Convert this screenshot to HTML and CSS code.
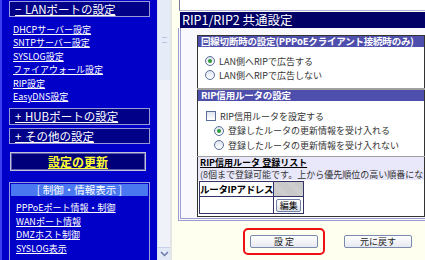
FILE: index.html
```html
<!DOCTYPE html>
<html lang="ja">
<head>
    <meta charset="UTF-8">
    <title>RIP設定</title>
    <link rel="stylesheet" href="styles.css">
</head>
<body>
<div class="frame">
    <nav class="side">
        <div class="group group-top"><a href="#">− LANポートの設定</a></div>
        <ul class="links">
            <li><a href="#">DHCPサーバー設定</a></li>
            <li><a href="#">SNTPサーバー設定</a></li>
            <li><a href="#">SYSLOG設定</a></li>
            <li><a href="#">ファイアウォール設定</a></li>
            <li><a href="#">RIP設定</a></li>
            <li><a href="#">EasyDNS設定</a></li>
        </ul>
        <div class="group group-hub"><a href="#">+ HUBポートの設定</a></div>
        <div class="group"><a href="#">+ その他の設定</a></div>
        <div class="update"><a href="#">設定の更新</a></div>
        <div class="info">
            <div class="info-head">[ 制御・情報表示 ]</div>
            <ul class="links info-links">
                <li><a href="#">PPPoEポート情報・制御</a></li>
                <li><a href="#">WANポート情報</a></li>
                <li><a href="#">DMZホスト制御</a></li>
                <li><a href="#">SYSLOG表示</a></li>
            </ul>
        </div>
    </nav>

    <div class="scrollbar">
        <div class="thumb"><span class="grip"></span></div>
        <div class="arrow">
            <svg width="9" height="6" viewBox="0 0 9 6"><path d="M1 1 L4.5 4.5 L8 1" fill="none" stroke="#6a7aa8" stroke-width="1.5"/></svg>
        </div>
    </div>

    <main class="content">
        <div class="prev"></div>
        <h2 class="title">RIP1/RIP2 共通設定</h2>
        <div class="panel">
            <table class="settings">
                <tr><th class="head">回線切断時の設定(PPPoEクライアント接続時のみ)</th></tr>
                <tr>
                    <td class="opts opts-first">
                        <div class="opt"><span class="radio on"></span>LAN側へRIPで広告する</div>
                        <div class="opt"><span class="radio"></span>LAN側へRIPで広告しない</div>
                    </td>
                </tr>
                <tr><th class="head">RIP信用ルータの設定</th></tr>
                <tr>
                    <td class="opts opts-second">
                        <div class="opt"><span class="check"></span>RIP信用ルータを設定する</div>
                        <div class="opt sub"><span class="radio on"></span>登録したルータの更新情報を受け入れる</div>
                        <div class="opt sub"><span class="radio"></span>登録したルータの更新情報を受け入れない</div>
                    </td>
                </tr>
                <tr>
                    <td class="list">
                        <div class="list-title">RIP信用ルータ 登録リスト</div>
                        <div class="list-note">(8個まで登録可能です。上から優先順位の高い順番になります)</div>
                    </td>
                </tr>
                <tr>
                    <td class="reg">
                        <table class="routers">
                            <tr><th class="ip">ルータIPアドレス</th><th class="blank"></th></tr>
                            <tr><td></td><td class="edit-cell"><button class="btn-edit">編集</button></td></tr>
                        </table>
                    </td>
                </tr>
            </table>
        </div>
        <div class="actions">
            <div class="focus"><button class="btn">設 定</button></div>
            <button class="btn">元に戻す</button>
        </div>
    </main>
</div>
</body>
</html>
```

FILE: styles.css
```css
body {
    margin: 0;
    font-family: "Noto Sans CJK JP", "DejaVu Sans", sans-serif;
    background-color: #fffff0;
    overflow: hidden;
}

.frame {
    display: flex;
    height: 260px;
    overflow: hidden;
}

/* left menu */
.side {
    width: 155px;
    flex-shrink: 0;
    background-color: #0000c8;
    border-left: 2px solid #3c3cf0;
    overflow: hidden;
}

.side a {
    color: #fff;
}

.group {
    margin: 0 0 3px 7px;
    width: 134px;
    height: 14px;
    border: 1px solid #9a9ad8;
    background-color: #000088;
    font-size: 11.5px;
    line-height: 14px;
    padding-left: 5px;
    white-space: nowrap;
    word-spacing: 1px;
}

.group-top {
    margin-top: 1px;
}

.group-hub {
    margin-top: 5px;
    height: 15px;
    line-height: 15px;
}

.links {
    list-style: none;
    margin: 0;
    padding: 3px 0 0 11px;
    font-size: 9px;
    line-height: 13.4px;
}

.update {
    margin: 8px 0 0 8px;
    width: 134px;
    height: 17px;
    border: 1px solid #c4c4d8;
    outline: 1px solid #5a5ab0;
    outline-offset: -2px;
    background-color: #00007a;
    text-align: center;
    font-size: 12px;
    font-weight: bold;
    line-height: 17px;
}

.update a {
    color: #ffff33;
}

.info {
    margin: 11px 0 0 7px;
    width: 139px;
    height: 90px;
    border: 1px solid #9a9ad8;
}

.info-head {
    background-color: #4a78f0;
    color: #fff;
    text-align: center;
    font-size: 10.5px;
    line-height: 12px;
    margin: 1px 1px 0;
}

.info-links {
    padding: 5px 0 0 6px;
}

/* frame scrollbar */
.scrollbar {
    width: 12px;
    flex-shrink: 0;
    border-left: 1px solid #d7def0;
    border-right: 2px solid #e4e4e4;
    background-color: #f0f2fa;
    display: flex;
    flex-direction: column;
    justify-content: space-between;
}

.thumb {
    height: 80px;
    background-color: #e6ebf8;
    display: flex;
    align-items: center;
    justify-content: center;
}

.grip {
    width: 5px;
    height: 4px;
    border-top: 1px solid #b8c4e0;
    border-bottom: 1px solid #b8c4e0;
}

.arrow {
    height: 12px;
    background-color: #e2e8f6;
    border-top: 1px solid #c8d0e8;
    display: flex;
    align-items: center;
    justify-content: center;
}

/* main area */
.content {
    flex: 1;
    padding-left: 6px;
    overflow: hidden;
}

.prev {
    height: 10px;
    width: 300px;
    background-color: #fff;
    border-left: 1px solid #7a7a9a;
    border-bottom: 1px solid #b0b0d8;
    margin-left: 1px;
}

.title {
    margin: 1px 0 0 2px;
    width: 300px;
    height: 16px;
    background-color: #000066;
    color: #fff;
    font-size: 12.5px;
    font-weight: normal;
    line-height: 16px;
    padding-left: 2px;
    white-space: nowrap;
}

.panel {
    width: 300px;
    border: 3px double #9c9cd0;
    border-top: none;
    background-color: #f8f8fd;
    padding: 7px 0 1px 16px;
}

.settings {
    width: 228px;
    table-layout: fixed;
    border: 1px solid #333;
    border-collapse: collapse;
    background-color: #fff;
    font-size: 9px;
    color: #333;
}

.settings td,
.settings th {
    padding: 0;
}

.head {
    height: 11px;
    background-color: #4e4eac;
    color: #fff;
    font-size: 9.5px;
    font-weight: bold;
    text-align: left;
    padding-left: 3px !important;
    line-height: 11px;
    white-space: nowrap;
    overflow: hidden;
    letter-spacing: -0.2px;
}

.opts-first {
    height: 34px;
    padding: 7px 0 0 7px !important;
    vertical-align: top;
    border-bottom: 2px solid #a0a0a0;
}

.opts-second {
    height: 47px;
    padding: 8px 0 0 8px !important;
    vertical-align: top;
    border-bottom: 1px solid #a0a0a0;
}

.opt {
    display: flex;
    align-items: center;
    height: 14px;
    white-space: nowrap;
}

.opts-second .opt {
    height: 14.5px;
}

.opt.sub {
    padding-left: 8px;
}

.radio,
.check {
    display: inline-block;
    width: 8px;
    height: 8px;
    border: 1px solid #5a6e9a;
    background: linear-gradient(#dfe4ee, #fff);
    margin-right: 4px;
    flex-shrink: 0;
}

.radio {
    border-radius: 50%;
    position: relative;
}

.radio.on::after {
    content: "";
    position: absolute;
    left: 2px;
    top: 2px;
    width: 4px;
    height: 4px;
    border-radius: 50%;
    background-color: #2f9a3a;
}

.list {
    height: 23px;
    background-color: #e8e8fa;
    padding-left: 2px !important;
    line-height: 11.5px;
    vertical-align: top;
}

.list-title,
.list-note {
    width: 224px;
    height: 11.5px;
    white-space: nowrap;
    overflow: hidden;
}

.list-title {
    font-weight: bold;
    text-decoration: underline;
    color: #000;
}

.list-note {
    color: #333;
}

.reg {
    height: 33px;
    padding: 1px 0 2px 1px !important;
    vertical-align: top;
}

.routers {
    border-collapse: collapse;
    border: 1px solid #333366;
}

.routers th,
.routers td {
    border: 1px solid #333366;
    padding: 0;
}

.ip {
    width: 72px;
    height: 14px;
    font-size: 9.5px;
    font-weight: bold;
    text-align: left;
    color: #000;
    white-space: nowrap;
    letter-spacing: -0.3px;
}

.blank {
    width: 29px;
    background: repeating-linear-gradient(45deg, #c4c4c4 0 1px, #d2d2d2 1px 2px);
}

.routers td {
    height: 16px;
}

.edit-cell {
    text-align: center;
}

.btn-edit {
    font-family: inherit;
    font-size: 9px;
    height: 13px;
    width: 25px;
    padding: 0;
    border: 1px solid #7080a8;
    border-radius: 2px;
    background: linear-gradient(#fff, #dde2ec);
    color: #000;
    line-height: 11px;
    display: block;
    margin: 0 auto;
}

.actions {
    display: flex;
    align-items: center;
    margin: 7px 0 0 65px;
}

.focus {
    border: 2px solid #ee1111;
    border-radius: 5px;
    padding: 5px 5px;
    margin-right: 19px;
}

.btn {
    font-family: inherit;
    width: 68px;
    height: 13px;
    padding: 0;
    font-size: 9px;
    line-height: 11px;
    border: 1px solid #7a8ab0;
    border-radius: 2px;
    background: linear-gradient(#fff, #e6e9f0);
    color: #222;
    display: block;
}
```
